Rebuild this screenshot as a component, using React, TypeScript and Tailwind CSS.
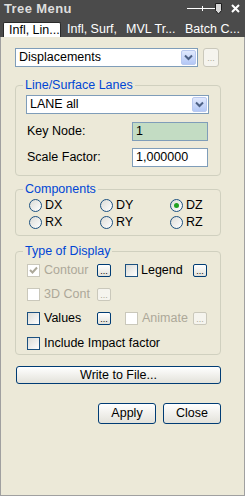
import React from 'react';

const Chevron = () => (
  <svg width="9" height="7" viewBox="0 0 9 7">
    <path d="M1 1.5 L4.5 5 L8 1.5" fill="none" stroke="#4d6185" strokeWidth="2" />
  </svg>
);

const Select = ({ value }: { value: string }) => (
  <div className="flex h-[19px] w-full items-stretch border border-[#7f9db9] bg-white">
    <span className="flex-1 pl-[3px] leading-[17px]">{value}</span>
    <span className="m-px flex w-[15px] items-center justify-center rounded-[2px] border border-[#b9c9ef] bg-gradient-to-b from-[#e1e9fd] to-[#b4c8f6]">
      <Chevron />
    </span>
  </div>
);

const DotsButton = ({ disabled }: { disabled?: boolean }) => (
  <span
    className={
      disabled
        ? 'flex h-[13px] w-[14px] items-end justify-center rounded-[2px] border border-[#cac8bb] bg-[#f5f4ee] text-[9px] leading-[9px] text-[#aca899]'
        : 'flex h-[13px] w-[14px] items-end justify-center rounded-[2px] border border-[#003c74] bg-gradient-to-b from-white to-[#e3e2da] text-[9px] leading-[9px] text-black'
    }
  >
    ...
  </span>
);

const Check = ({ checked, disabled, label }: { checked?: boolean; disabled?: boolean; label: string }) => (
  <span className="flex items-center gap-[4px]">
    <span
      className={
        disabled
          ? 'flex h-[13px] w-[13px] items-center justify-center border border-[#cac8bb] bg-white'
          : 'flex h-[13px] w-[13px] items-center justify-center border border-[#1c5180] bg-gradient-to-br from-[#dcdcd7] to-white'
      }
    >
      {checked && (
        <svg width="9" height="9" viewBox="0 0 9 9">
          <path d="M1 4 L3.5 6.5 L8 1.5" fill="none" stroke="#aca899" strokeWidth="2" />
        </svg>
      )}
    </span>
    <span className={disabled ? 'leading-[13px] text-[#aca899]' : 'leading-[13px]'}>{label}</span>
  </span>
);

const Radio = ({ checked, label }: { checked?: boolean; label: string }) => (
  <span className="flex items-center gap-[3px]">
    <span className="flex h-[13px] w-[13px] items-center justify-center rounded-full border border-[#1c5180] bg-gradient-to-br from-[#dcdcd7] to-white">
      {checked && <span className="h-[5px] w-[5px] rounded-full bg-[#21a121]" />}
    </span>
    <span className="leading-[13px]">{label}</span>
  </span>
);

export default function App() {
  return (
    <div className="flex h-[496px] w-[245px] flex-col bg-[#ece9d8] font-['Liberation_Sans',Arial,sans-serif] text-[12.5px] text-black">
      {/* title bar */}
      <div className="flex h-[17px] items-center justify-between bg-[#4b4b4b] pl-[4px] pr-[3px]">
        <span className="text-[13px] font-bold leading-[14px] tracking-[0.4px] text-[#dedede]">Tree Menu</span>
        <span className="flex items-center gap-[8px]">
          <svg width="38" height="15" viewBox="0 0 38 15">
            <path d="M2 7.5 H31" stroke="#ffffff" strokeWidth="1" />
            <path d="M17.5 5 V10" stroke="#ffffff" strokeWidth="1" />
            <path d="M30.5 2.5 H36.5 V9.5 L33.5 13 L30.5 9.5 Z" fill="#d6d6d6" stroke="#1e1e1e" strokeWidth="1" />
          </svg>
          <svg width="9" height="9" viewBox="0 0 9 9" className="mr-[2px]">
            <path d="M1 1 L8 8 M8 1 L1 8" stroke="#ffffff" strokeWidth="2" />
          </svg>
        </span>
      </div>

      {/* tabs */}
      <div className="flex h-[20px] items-end bg-[#4b4b4b] pl-[3px] text-[12.5px]">
        <span className="h-[15px] w-[58px] rounded-t-[2px] border border-b-0 border-[#2a2a2a] bg-white pl-[5px] leading-[14px]">
          Infl, Lin...
        </span>
        <span className="h-[15px] w-[59px] pl-[6px] leading-[14px] text-white">Infl, Surf,</span>
        <span className="h-[15px] w-[59px] pl-[6px] leading-[14px] text-white">MVL Tr...</span>
        <span className="h-[15px] flex-1 pl-[6px] leading-[14px] text-white">Batch C...</span>
      </div>

      {/* content */}
      <div className="flex flex-1 flex-col border-x border-b border-[#a0a0a0] pl-[14px] pr-[23px] pt-[11px]">
        <div className="flex items-center gap-[5px]">
          <div className="w-[183px]">
            <Select value="Displacements" />
          </div>
          <span className="flex h-[19px] w-[16px] items-end justify-center rounded-[3px] border border-[#cac8bb] bg-[#f5f4ee] pb-[3px] text-[9px] leading-[9px] text-[#aca899]">
            ...
          </span>
        </div>

        <fieldset className="mt-[11px] rounded-[4px] border border-[#d0d0bf] pb-[8px] pl-[10px] pr-[11px] pt-[3px]">
          <legend className="-ml-[3px] px-[2px] leading-[14px] text-[#0046d5]">Line/Surface Lanes</legend>
          <Select value="LANE all" />
          <div className="mt-[8px] flex items-center">
            <span className="w-[106px] pl-[1px]">Key Node:</span>
            <span className="h-[19px] w-[76px] border border-[#7f9db9] bg-[#c3dcc3] pl-[3px] leading-[17px]">1</span>
          </div>
          <div className="mt-[7px] flex items-center">
            <span className="w-[106px] pl-[1px]">Scale Factor:</span>
            <span className="h-[19px] w-[76px] border border-[#7f9db9] bg-white pl-[3px] leading-[17px]">1,000000</span>
          </div>
        </fieldset>

        <fieldset className="mt-[6px] rounded-[4px] border border-[#d0d0bf] pb-[6px] pl-[13px] pt-[3px]">
          <legend className="-ml-[6px] px-[2px] leading-[14px] text-[#0046d5]">Components</legend>
          <div className="grid grid-cols-[71px_70px_1fr] gap-y-[4px]">
            <Radio label="DX" />
            <Radio label="DY" />
            <Radio label="DZ" checked />
            <Radio label="RX" />
            <Radio label="RY" />
            <Radio label="RZ" />
          </div>
        </fieldset>

        <fieldset className="mt-[8px] rounded-[4px] border border-[#d0d0bf] pb-[4px] pl-[11px] pt-[6px]">
          <legend className="-ml-[4px] px-[2px] leading-[14px] text-[#0046d5]">Type of Display</legend>
          <div className="flex flex-col gap-[11px]">
            <div className="flex items-center">
              <span className="w-[70px]">
                <Check label="Contour" checked disabled />
              </span>
              <DotsButton />
              <span className="ml-[14px] w-[68px]">
                <span className="flex items-center gap-[3px]">
                  <span className="h-[13px] w-[13px] border border-[#1c5180] bg-gradient-to-br from-[#dcdcd7] to-white" />
                  <span className="leading-[13px]">Legend</span>
                </span>
              </span>
              <DotsButton />
            </div>
            <div className="flex items-center">
              <span className="w-[70px]">
                <Check label="3D Cont" disabled />
              </span>
              <DotsButton disabled />
            </div>
            <div className="flex items-center">
              <span className="w-[70px]">
                <Check label="Values" />
              </span>
              <DotsButton />
              <span className="ml-[14px] w-[68px]">
                <span className="flex items-center gap-[4px]">
                  <span className="h-[13px] w-[13px] border border-[#cac8bb] bg-white" />
                  <span className="leading-[13px] text-[#aca899]">Animate</span>
                </span>
              </span>
              <DotsButton disabled />
            </div>
            <div className="mt-px flex items-center">
              <Check label="Include Impact factor" />
            </div>
          </div>
        </fieldset>

        <button className="ml-[1px] mt-[11px] h-[18px] w-[205px] rounded-[3px] border border-[#003c74] bg-gradient-to-b from-white to-[#e3e2da] leading-[16px]">
          Write to File...
        </button>

        <div className="mt-[19px] flex justify-end gap-[7px]">
          <button className="h-[21px] w-[58px] rounded-[3px] border border-[#003c74] bg-gradient-to-b from-white to-[#e3e2da] leading-[19px]">
            Apply
          </button>
          <button className="h-[21px] w-[58px] rounded-[3px] border border-[#003c74] bg-gradient-to-b from-white to-[#e3e2da] leading-[19px]">
            Close
          </button>
        </div>
      </div>
    </div>
  );
}
